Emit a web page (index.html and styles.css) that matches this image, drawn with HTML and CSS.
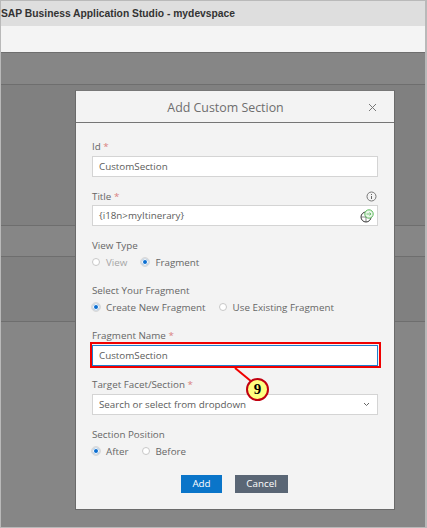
FILE: index.html
```html
<!DOCTYPE html>
<html lang="en">
<head>
    <meta charset="UTF-8">
    <title>Add Custom Section</title>
    <link rel="stylesheet" href="styles.css">
</head>
<body>
    <div class="window">
        <div class="titlebar">SAP Business Application Studio - mydevspace</div>
        <div class="toolbar"></div>
        <div class="backdrop">
            <div class="band band-top"></div>
            <div class="band band-main"></div>
            <div class="band band-mid"></div>
            <div class="band band-lower"></div>
            <div class="band band-end"></div>
        </div>
    </div>

    <div class="dialog">
        <div class="dialog-header">
            <span class="dialog-title">Add Custom Section</span>
            <svg class="close-icon" width="9" height="9" viewBox="0 0 9 9">
                <path d="M1 1 L8 8 M8 1 L1 8" stroke="#777" stroke-width="1" fill="none"/>
            </svg>
        </div>
        <div class="dialog-body">
            <div class="field tight">
                <label class="field-label">Id <span class="req">*</span></label>
                <div class="input">CustomSection</div>
            </div>
            <div class="field">
                <label class="field-label label-row">
                    <span>Title <span class="req">*</span></span>
                    <svg width="11" height="11" viewBox="0 0 11 11">
                        <circle cx="5.5" cy="5.5" r="4.5" stroke="#777" fill="none"/>
                        <path d="M5.5 5 V8 M5.5 3 V4" stroke="#666" fill="none"/>
                    </svg>
                </label>
                <div class="input input-icon">
                    <span>{i18n&gt;myItinerary}</span>
                    <svg class="globe" width="14" height="14" viewBox="0 0 14 14">
                        <circle cx="6" cy="8" r="5" stroke="#333" fill="#fff"/>
                        <path d="M1.5 8 H10.5 M6 3 V13" stroke="#555" stroke-width="0.7" fill="none"/>
                        <circle cx="9" cy="5" r="4.2" stroke="#5cb85c" fill="#e9f6e9"/>
                        <path d="M6.5 5 H11 M9.5 3.5 L11 5 L9.5 6.5" stroke="#5cb85c" stroke-width="0.8" fill="none"/>
                    </svg>
                </div>
            </div>
            <div class="field">
                <label class="field-label">View Type</label>
                <div class="radio-row">
                    <span class="radio-item disabled"><i class="radio"></i>View</span>
                    <span class="radio-item"><i class="radio checked"></i>Fragment</span>
                </div>
            </div>
            <div class="field">
                <label class="field-label">Select Your Fragment</label>
                <div class="radio-row">
                    <span class="radio-item"><i class="radio checked"></i>Create New Fragment</span>
                    <span class="radio-item"><i class="radio"></i>Use Existing Fragment</span>
                </div>
            </div>
            <div class="field tight">
                <label class="field-label">Fragment Name <span class="req">*</span></label>
                <div class="input input-focus">CustomSection</div>
            </div>
            <div class="field">
                <label class="field-label">Target Facet/Section <span class="req">*</span></label>
                <div class="input input-icon">
                    <span>Search or select from dropdown</span>
                    <svg class="caret" width="7" height="5" viewBox="0 0 7 5">
                        <path d="M1 1 L3.5 3.5 L6 1" stroke="#666" fill="none"/>
                    </svg>
                </div>
            </div>
            <div class="field">
                <label class="field-label">Section Position</label>
                <div class="radio-row">
                    <span class="radio-item"><i class="radio checked"></i>After</span>
                    <span class="radio-item"><i class="radio"></i>Before</span>
                </div>
            </div>
            <div class="actions">
                <button class="btn btn-add">Add</button>
                <button class="btn btn-cancel">Cancel</button>
            </div>
        </div>
    </div>

    <!-- callout over the fragment name field -->
    <div class="highlight"></div>
    <svg class="leader" width="30" height="20" viewBox="0 0 30 20">
        <path d="M1 0 L18 14" stroke="#f00000" stroke-width="2" fill="none"/>
    </svg>
    <div class="step-badge">9</div>
</body>
</html>
```

FILE: styles.css
```css
* {
    margin: 0;
    padding: 0;
    box-sizing: border-box;
}

body {
    width: 427px;
    height: 528px;
    overflow: hidden;
    position: relative;
    background-color: #fff;
    font-family: "Open Sans", "Noto Sans", sans-serif;
}

.window {
    width: 427px;
    height: 528px;
    display: flex;
    flex-direction: column;
    border: 1px solid #b9b9b9;
    border-right-width: 2px;
}

.titlebar {
    height: 25px;
    padding-top: 5px;
    background-color: #dedede;
    color: #333;
    font-family: "Liberation Sans", Arial, sans-serif;
    font-size: 10.3px;
    font-weight: bold;
    line-height: 16px;
    white-space: nowrap;
}

.toolbar {
    height: 26px;
    background-color: #f4f4f4;
}

.backdrop {
    flex: 1;
    display: flex;
    flex-direction: column;
    background-color: #868686;
}

.band {
    border-top: 1px solid #6e6e6e;
}

.band-top { height: 32px; }
.band-main { height: 141px; background-color: #808080; }
.band-mid { height: 31px; background-color: #868686; }
.band-lower { height: 65px; background-color: #808080; }
.band-end { flex: 1; }

.dialog {
    position: absolute;
    left: 75px;
    top: 90px;
    width: 320px;
    height: 420px;
    background-color: #f3f3f3;
    border: 1px solid #6a6a6a;
    border-top-color: #777;
    color: #666;
}

.dialog-header {
    height: 32px;
    position: relative;
    display: flex;
    align-items: center;
    justify-content: center;
    padding: 1px 19px 0 0;
    border-bottom: 1px solid #757575;
}

.dialog-title {
    font-size: 12.4px;
    color: #6e6e6e;
}

.close-icon {
    position: absolute;
    right: 17px;
    top: 12px;
}

.dialog-body {
    padding: 16px 16px 0 16px;
    display: flex;
    flex-direction: column;
    gap: 12px;
}

.tight {
    margin-bottom: -1px;
}

.field-label {
    display: block;
    height: 14px;
    margin-bottom: 3px;
    font-size: 9.8px;
    line-height: 16px;
    color: #666;
}

.label-row {
    display: flex;
    justify-content: space-between;
    align-items: center;
    padding: 3px 1px 0 0;
}

.req {
    color: #d98080;
}

.input {
    height: 21px;
    padding: 0 6px;
    background-color: #fff;
    border: 1px solid #d4d4d4;
    font-size: 9.8px;
    line-height: 19px;
    color: #5c5c5c;
    white-space: nowrap;
}

.input-icon {
    display: flex;
    justify-content: space-between;
    align-items: center;
    padding-right: 1px;
}

.globe {
    margin-right: 2px;
}

.caret {
    margin-right: 6px;
}

.input-focus {
    border-color: #1f7fcf;
}

.radio-row {
    display: flex;
    gap: 13px;
    height: 18px;
    margin-top: -2px;
    align-items: center;
}

.radio-item {
    display: flex;
    align-items: center;
    gap: 6px;
    font-size: 9.8px;
    color: #666;
}

.radio-item.disabled {
    margin-right: 1px;
    color: #a5a5a5;
}

.radio {
    width: 8px;
    height: 8px;
    border-radius: 50%;
    background-color: #fff;
    border: 1px solid #c8c8c8;
}

.radio.checked {
    background-color: #0a6ed1;
    border: 1px solid #e4e4e4;
    outline: 1px solid #d8d8d8;
    outline-offset: 0;
    box-shadow: inset 0 0 0 1px #fff;
}

.actions {
    display: flex;
    justify-content: center;
    gap: 13px;
    margin-top: 3px;
    padding-right: 1px;
}

.btn {
    height: 18px;
    border: none;
    color: #fff;
    font-family: inherit;
    font-size: 9.8px;
    line-height: 18px;
}

.btn-add {
    width: 41px;
    background-color: #0a75c9;
}

.btn-cancel {
    width: 53px;
    background-color: #5a6675;
}

.highlight {
    position: absolute;
    left: 90px;
    top: 342px;
    width: 291px;
    height: 26px;
    border: 2px solid #f00000;
}

.leader {
    position: absolute;
    left: 234px;
    top: 368px;
}

.step-badge {
    position: absolute;
    left: 246px;
    top: 378px;
    width: 23px;
    height: 23px;
    border-radius: 50%;
    background-color: #ffff80;
    border: 2px solid #c00010;
    color: #000;
    font-family: "Liberation Serif", serif;
    font-size: 15px;
    font-weight: bold;
    line-height: 19px;
    text-align: center;
}
```
